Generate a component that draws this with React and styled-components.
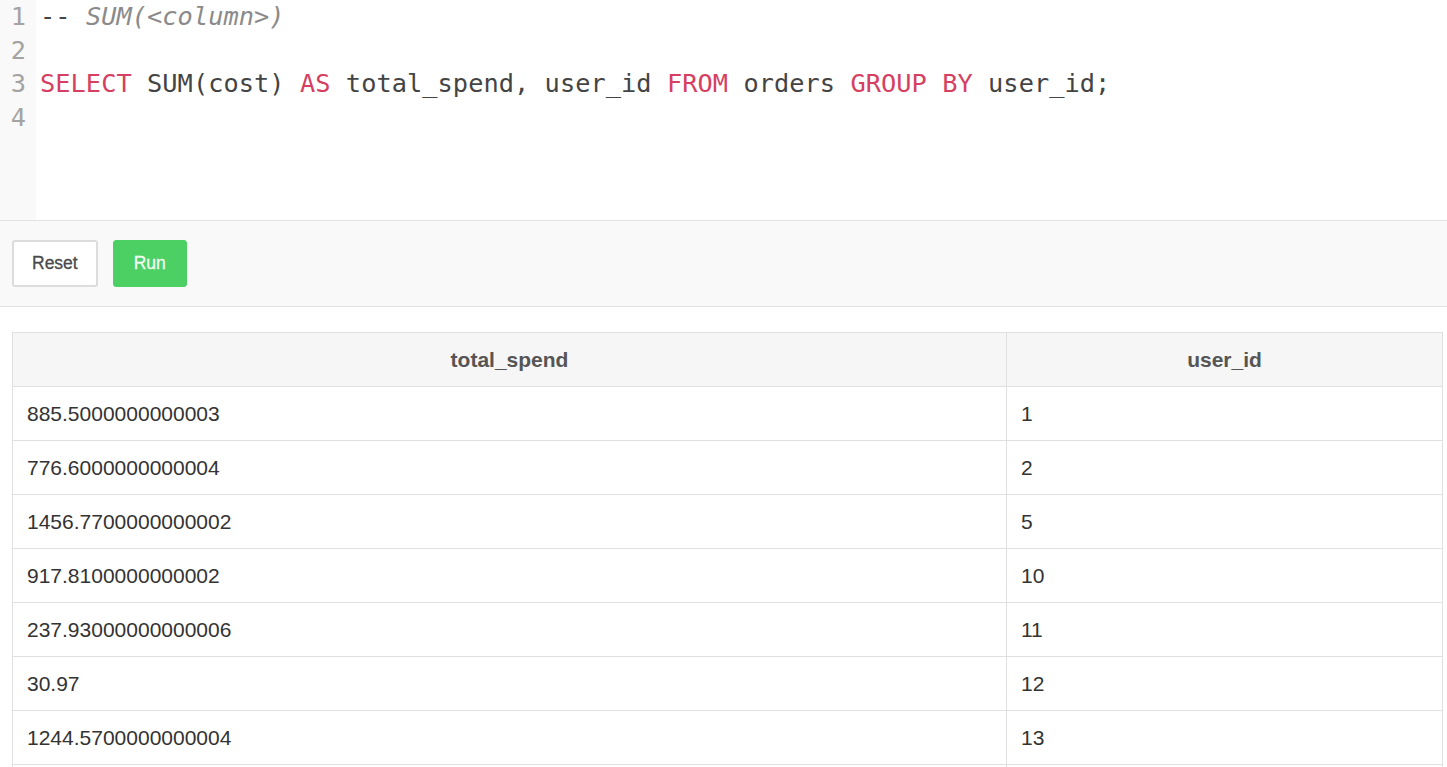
import React from 'react';
import styled, { createGlobalStyle } from 'styled-components';

const GlobalStyle = createGlobalStyle`
  html, body {
    margin: 0;
    padding: 0;
    background: #fff;
    overflow: hidden;
  }
`;

const Page = styled.div`
  width: 1447px;
  height: 767px;
  overflow: hidden;
  font-family: 'Liberation Sans', Arial, sans-serif;
`;

const Editor = styled.div`
  display: flex;
  height: 220px;
  border-bottom: 1px solid #e2e2e2;
  overflow: hidden;
  font-family: 'DejaVu Sans Mono', monospace;
  font-size: 25.3px;
  line-height: 33.7px;
`;

const Gutter = styled.div`
  width: 36px;
  flex-shrink: 0;
  background: #f9f9f9;
  color: #a3a3a3;
  text-align: right;
  padding: 0 10px 0 0;
  box-sizing: border-box;

  > div {
    height: 33.7px;
  }
`;

const Code = styled.div`
  flex: 1;
  padding-left: 4px;
  color: #444;
  white-space: pre;
  letter-spacing: 0.06px;

  > div {
    height: 33.7px;
  }
`;

const Kw = styled.span`
  color: #d63f62;
`;

const Comment = styled.span`
  color: #8a8a8a;
  font-style: italic;
`;

const Toolbar = styled.div`
  display: flex;
  align-items: center;
  gap: 15px;
  height: 85px;
  padding: 0 12px;
  background: #f9f9f9;
  border-bottom: 1px solid #e2e2e2;
`;

const Button = styled.button`
  height: 47px;
  padding: 0 ${p => (p.$primary ? '20px' : '18px')};
  border-radius: 3px;
  font-family: 'Liberation Sans', Arial, sans-serif;
  font-size: 17.5px;
  cursor: pointer;
  border: ${p => (p.$primary ? '1px solid #4ccf63' : '2px solid #dcdcdc')};
  background: ${p => (p.$primary ? '#4ccf63' : '#fff')};
  color: ${p => (p.$primary ? '#f1fff3' : '#4a4a4a')};
  -webkit-text-stroke: 0.3px currentColor;
`;

const TableWrap = styled.div`
  padding: 25px 4px 0 12px;
`;

const Table = styled.table`
  width: 100%;
  border-collapse: collapse;
  font-size: 21px;
  color: #333;

  th, td {
    border: 1px solid #e0e0e0;
    height: 53px;
    padding: 0 14px;
  }

  th {
    background: #f6f6f6;
    font-weight: bold;
    color: #555;
    text-align: center;
  }

  td {
    text-align: left;
  }

  th:first-child, td:first-child {
    width: 965px;
  }
`;

const rows = [
  ['885.5000000000003', '1'],
  ['776.6000000000004', '2'],
  ['1456.7700000000002', '5'],
  ['917.8100000000002', '10'],
  ['237.93000000000006', '11'],
  ['30.97', '12'],
  ['1244.5700000000004', '13'],
  ['', ''],
];

const App = () => (
  <Page>
    <GlobalStyle />
    <Editor>
      <Gutter>
        {[1, 2, 3, 4].map(n => (
          <div key={n}>{n}</div>
        ))}
      </Gutter>
      <Code>
        <div>
          {'-- '}
          <Comment>{'SUM(<column>)'}</Comment>
        </div>
        <div> </div>
        <div>
          <Kw>SELECT</Kw> SUM(cost) <Kw>AS</Kw> total_spend, user_id <Kw>FROM</Kw> orders{' '}
          <Kw>GROUP BY</Kw> user_id;
        </div>
        <div> </div>
      </Code>
    </Editor>
    <Toolbar>
      <Button type='button'>Reset</Button>
      <Button type='button' $primary>
        Run
      </Button>
    </Toolbar>
    <TableWrap>
      <Table>
        <thead>
          <tr>
            <th>total_spend</th>
            <th>user_id</th>
          </tr>
        </thead>
        <tbody>
          {rows.map((r, i) => (
            <tr key={i}>
              <td>{r[0]}</td>
              <td>{r[1]}</td>
            </tr>
          ))}
        </tbody>
      </Table>
    </TableWrap>
  </Page>
);

export default App;
